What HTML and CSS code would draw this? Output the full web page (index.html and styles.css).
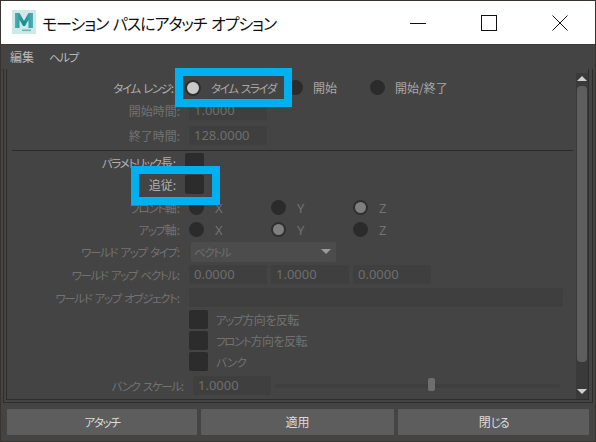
FILE: index.html
```html
<!DOCTYPE html>
<html lang="ja">
<head>
<meta charset="utf-8">
<title>モーション パスにアタッチ オプション</title>
<link rel="stylesheet" href="styles.css">
</head>
<body>
<div class="window">
  <header class="titlebar">
    <svg class="logo" width="24" height="24" viewBox="0 0 24 24">
      <defs>
        <linearGradient id="mg" x1="0" y1="0" x2="1" y2="0">
          <stop offset="0" stop-color="#4fb0b2"/>
          <stop offset="0.5" stop-color="#1a8a92"/>
          <stop offset="1" stop-color="#4fb0b2"/>
        </linearGradient>
      </defs>
      <rect width="24" height="24" fill="#cfe9e8"/>
      <path d="M3 3h4.5L12 11l4.5-8H21v15h-4.5V10L13 16h-2L7.5 10v8H3z" fill="url(#mg)"/>
      <rect x="10" y="19.5" width="9" height="1.6" fill="#6fb6b8"/>
    </svg>
    <div class="title kana-title">モーション パスにアタッチ オプション</div>
    <div class="controls">
      <span class="control"><svg width="16" height="16" viewBox="0 0 16 16"><path d="M0 8.5h16" stroke="#111" fill="none"/></svg></span>
      <span class="control"><svg width="16" height="16" viewBox="0 0 16 16"><rect x="0.5" y="0.5" width="15" height="15" stroke="#111" fill="none"/></svg></span>
      <span class="control"><svg width="16" height="16" viewBox="0 0 16 16"><path d="M0.5 0.5l15 15M15.5 0.5l-15 15" stroke="#111" fill="none"/></svg></span>
    </div>
  </header>
  <nav class="menubar"><span class="menu-item">編集</span><span class="menu-item kana">ヘルプ</span></nav>
  <div class="frame">
    <div class="inner">
      <div class="form">
        <div class="row">
          <span class="label label-range"><span class="kana">タイム レンジ</span>:</span>
          <span class="option option-1"><i class="radio radio-on"></i><span class="option-text kana">タイム スライダ</span></span>
          <span class="option option-2"><i class="radio radio-small"></i><span class="option-text">開始</span></span>
          <span class="option"><i class="radio radio-small"></i><span class="option-text">開始/終了</span></span>
        </div>
        <div class="row">
          <span class="label label-wide off">開始時間:</span>
          <span class="input">1.0000</span>
        </div>
        <div class="row row-loose">
          <span class="label label-wide off">終了時間:</span>
          <span class="input">128.0000</span>
        </div>
        <div class="separator"></div>
        <div class="row row-snug">
          <span class="label"><span class="kana">パラメトリック</span>長:</span>
          <i class="check"></i>
        </div>
        <div class="row row-snug">
          <span class="label">追従:</span>
          <i class="check"></i>
        </div>
        <div class="row">
          <span class="label label-wide off"><span class="kana">フロント</span>軸:</span>
          <span class="axis"><i class="radio radio-small"></i><span class="axis-text">X</span></span>
          <span class="axis"><i class="radio radio-small"></i><span class="axis-text">Y</span></span>
          <span class="axis"><i class="radio radio-small radio-dim"></i><span class="axis-text">Z</span></span>
        </div>
        <div class="row row-snug">
          <span class="label label-wide off"><span class="kana">アップ</span>軸:</span>
          <span class="axis"><i class="radio radio-small"></i><span class="axis-text">X</span></span>
          <span class="axis"><i class="radio radio-small radio-dim"></i><span class="axis-text">Y</span></span>
          <span class="axis"><i class="radio radio-small"></i><span class="axis-text">Z</span></span>
        </div>
        <div class="row row-snug">
          <span class="label label-wide off"><span class="kana">ワールド アップ タイプ</span>:</span>
          <span class="select"><span class="kana">ベクトル</span><i class="select-arrow"></i></span>
        </div>
        <div class="row">
          <span class="label label-wide off"><span class="kana">ワールド アップ ベクトル</span>:</span>
          <span class="inputs">
            <span class="input">0.0000</span>
            <span class="input">1.0000</span>
            <span class="input">0.0000</span>
          </span>
        </div>
        <div class="row">
          <span class="label label-wide off"><span class="kana">ワールド アップ オブジェクト</span>:</span>
          <span class="input input-full"></span>
        </div>
        <div class="row row-snug">
          <span class="label label-wide"></span>
          <i class="check"></i><span class="check-text"><span class="kana">アップ</span>方向を反転</span>
        </div>
        <div class="row row-tight">
          <span class="label label-wide"></span>
          <i class="check"></i><span class="check-text"><span class="kana">フロント</span>方向を反転</span>
        </div>
        <div class="row row-tight">
          <span class="label label-wide"></span>
          <i class="check"></i><span class="check-text kana">バンク</span>
        </div>
        <div class="row row-gap3">
          <span class="label label-bank off"><span class="kana">バンク スケール</span>:</span>
          <span class="input">1.0000</span>
          <span class="slider"><i class="slider-thumb"></i></span>
        </div>
      </div>
      <div class="scrollbar">
        <i class="arrow-up"></i>
        <i class="thumb"></i>
        <i class="arrow-down"></i>
      </div>
    </div>
  </div>
  <footer class="buttons">
    <button class="button"><span class="kana">アタッチ</span></button>
    <button class="button">適用</button>
    <button class="button">閉<span class="kana">じる</span></button>
  </footer>
  <div class="callout callout-range"></div>
  <div class="callout callout-follow"></div>
</div>
</body>
</html>
```

FILE: styles.css
```css
* { box-sizing: border-box; }
html, body { margin: 0; padding: 0; }
body {
  width: 596px;
  height: 442px;
  overflow: hidden;
  background: #38332f;
  padding: 1px 1px 1px 1px;
  font-family: "Noto Sans CJK JP", "Noto Sans", sans-serif;
  font-size: 12px;
  font-feature-settings: "palt";
}
.window {
  position: relative;
  width: 594px;
  height: 440px;
  background: #444444;
  display: flex;
  flex-direction: column;
}
.titlebar {
  height: 44px;
  flex: none;
  background: #ffffff;
  border-bottom: 1px solid #3a3a3a;
  display: flex;
  align-items: center;
  padding-left: 11px;
}
.logo { flex: none; margin-top: -1px; }
.title {
  margin-left: 6px;
  font-size: 16px;
  line-height: 20px;
  color: #111111;
  white-space: nowrap;
}
.kana-title {
  letter-spacing: -1.05px;
  word-spacing: 2px;
}
.controls {
  margin-left: auto;
  margin-right: 0;
  display: flex;
}
.control {
  width: 71px;
  height: 30px;
  display: flex;
  align-items: center;
  justify-content: center;
}
.control svg { display: block; }
.menubar {
  height: 24px;
  flex: none;
  display: flex;
  align-items: center;
  padding-left: 9px;
  gap: 15px;
  color: #b9b9b9;
  line-height: 16px;
}
.frame {
  height: 334px;
  flex: none;
  margin: 0 2px;
  padding: 0 3px 2px 2px;
  border: 1px solid #2d2d2d;
  border-top: 0;
}
.inner {
  height: 100%;
  display: flex;
  border: 1px solid #2d2d2d;
  border-top: 0;
}
.form {
  flex: 1;
  min-width: 0;
  padding-top: 6px;
  display: flex;
  flex-direction: column;
}
.row {
  height: 21px;
  flex: none;
  margin-top: 2px;
  display: flex;
  align-items: center;
  gap: 9px;
  white-space: nowrap;
}
.row-tight { margin-top: 0; }
.row-snug { margin-top: 1px; }
.row-gap3 { margin-top: 3px; }
.row-loose { margin-top: 4px; }
.label {
  flex: none;
  width: 169px;
  text-align: right;
  color: #b0b0b0;
}
.label-range { width: 167px; margin-right: 2px; }
.label-wide { width: 173px; }
.label-bank { width: 177px; }
.off { color: #727272; }
.kana {
  font-size: 11.5px;
  letter-spacing: -1.35px;
  word-spacing: 2px;
}
.option {
  display: flex;
  align-items: center;
  color: #a8a8a8;
}
.option-1 { width: 94px; }
.option-2 { width: 73px; }
.option-text { margin-left: 10px; }
.radio {
  display: block;
  flex: none;
  width: 15px;
  height: 15px;
  border-radius: 50%;
  background: #2b2b2b;
}
.radio-on {
  width: 16px;
  height: 16px;
  background: #c9c9c9;
  border: 2px solid #2f2f2f;
}
.radio-dim {
  background: #7f7f7f;
  border: 2px solid #2f2f2f;
}
.axis {
  width: 82px;
  display: flex;
  align-items: center;
  color: #727272;
  font-family: "Noto Sans", sans-serif;
  font-size: 13px;
}
.row .axis + .axis { margin-left: -9px; }
.axis-text { margin-left: 11px; }
.input {
  display: block;
  flex: none;
  width: 78px;
  height: 19px;
  padding-left: 5px;
  border-radius: 2px;
  background: #3f3f3f;
  color: #6e6e6e;
  font-family: "Noto Sans", sans-serif;
  font-size: 13px;
  line-height: 19px;
}
.input-full { width: 374px; }
.inputs { display: flex; gap: 4px; }
.select {
  width: 145px;
  height: 20px;
  margin-left: 2px;
  padding: 0 5px 0 3px;
  border-radius: 2px;
  background: #4c4c4c;
  color: #6e6e6e;
  display: flex;
  align-items: center;
  justify-content: space-between;
}
.select-arrow {
  width: 0;
  height: 0;
  border-left: 5px solid transparent;
  border-right: 5px solid transparent;
  border-top: 5px solid #9a9a9a;
}
.check {
  display: block;
  flex: none;
  width: 19px;
  height: 19px;
  border-radius: 2px;
  background: #2c2c2c;
}
.check-text {
  margin-left: -1px;
  color: #727272;
  letter-spacing: -0.5px;
}
.slider {
  position: relative;
  width: 285px;
  height: 4px;
  margin-left: -5px;
  border-radius: 2px;
  background: #3f3f3f;
}
.slider-thumb {
  position: absolute;
  left: 153px;
  top: -6px;
  width: 7px;
  height: 13px;
  border-radius: 2px;
  background: #6e6e6e;
}
.separator {
  height: 1px;
  flex: none;
  margin: 4px 3px 0 5px;
  background: #2a2a2a;
}
.scrollbar {
  flex: none;
  width: 12px;
  margin-top: 4px;
  padding: 3px 1px 5px;
  background: #3a3a3a;
  display: flex;
  flex-direction: column;
  align-items: center;
}
.arrow-up {
  width: 0;
  height: 0;
  border-left: 5px solid transparent;
  border-right: 5px solid transparent;
  border-bottom: 5px solid #cfcfcf;
}
.thumb {
  width: 10px;
  height: 276px;
  margin-top: 5px;
  border-radius: 4px;
  background: #5e5e5e;
}
.arrow-down {
  width: 0;
  height: 0;
  margin-top: auto;
  border-left: 5px solid transparent;
  border-right: 5px solid transparent;
  border-top: 5px solid #cfcfcf;
}
.buttons {
  margin: 6px 0 0 6px;
  display: grid;
  grid-template-columns: 190px 193px 191px;
  gap: 4px;
}
.button {
  height: 26px;
  padding: 0;
  border: 0;
  border-radius: 1px;
  background: #5d5d5d;
  color: #dcdcdc;
  font: inherit;
  font-feature-settings: "palt";
  line-height: 26px;
}
.callout {
  position: absolute;
  border: 8px solid #00b0f0;
}
.callout-range { left: 174px; top: 67px; width: 117px; height: 39px; }
.callout-follow { left: 130px; top: 165px; width: 89px; height: 39px; }
```
